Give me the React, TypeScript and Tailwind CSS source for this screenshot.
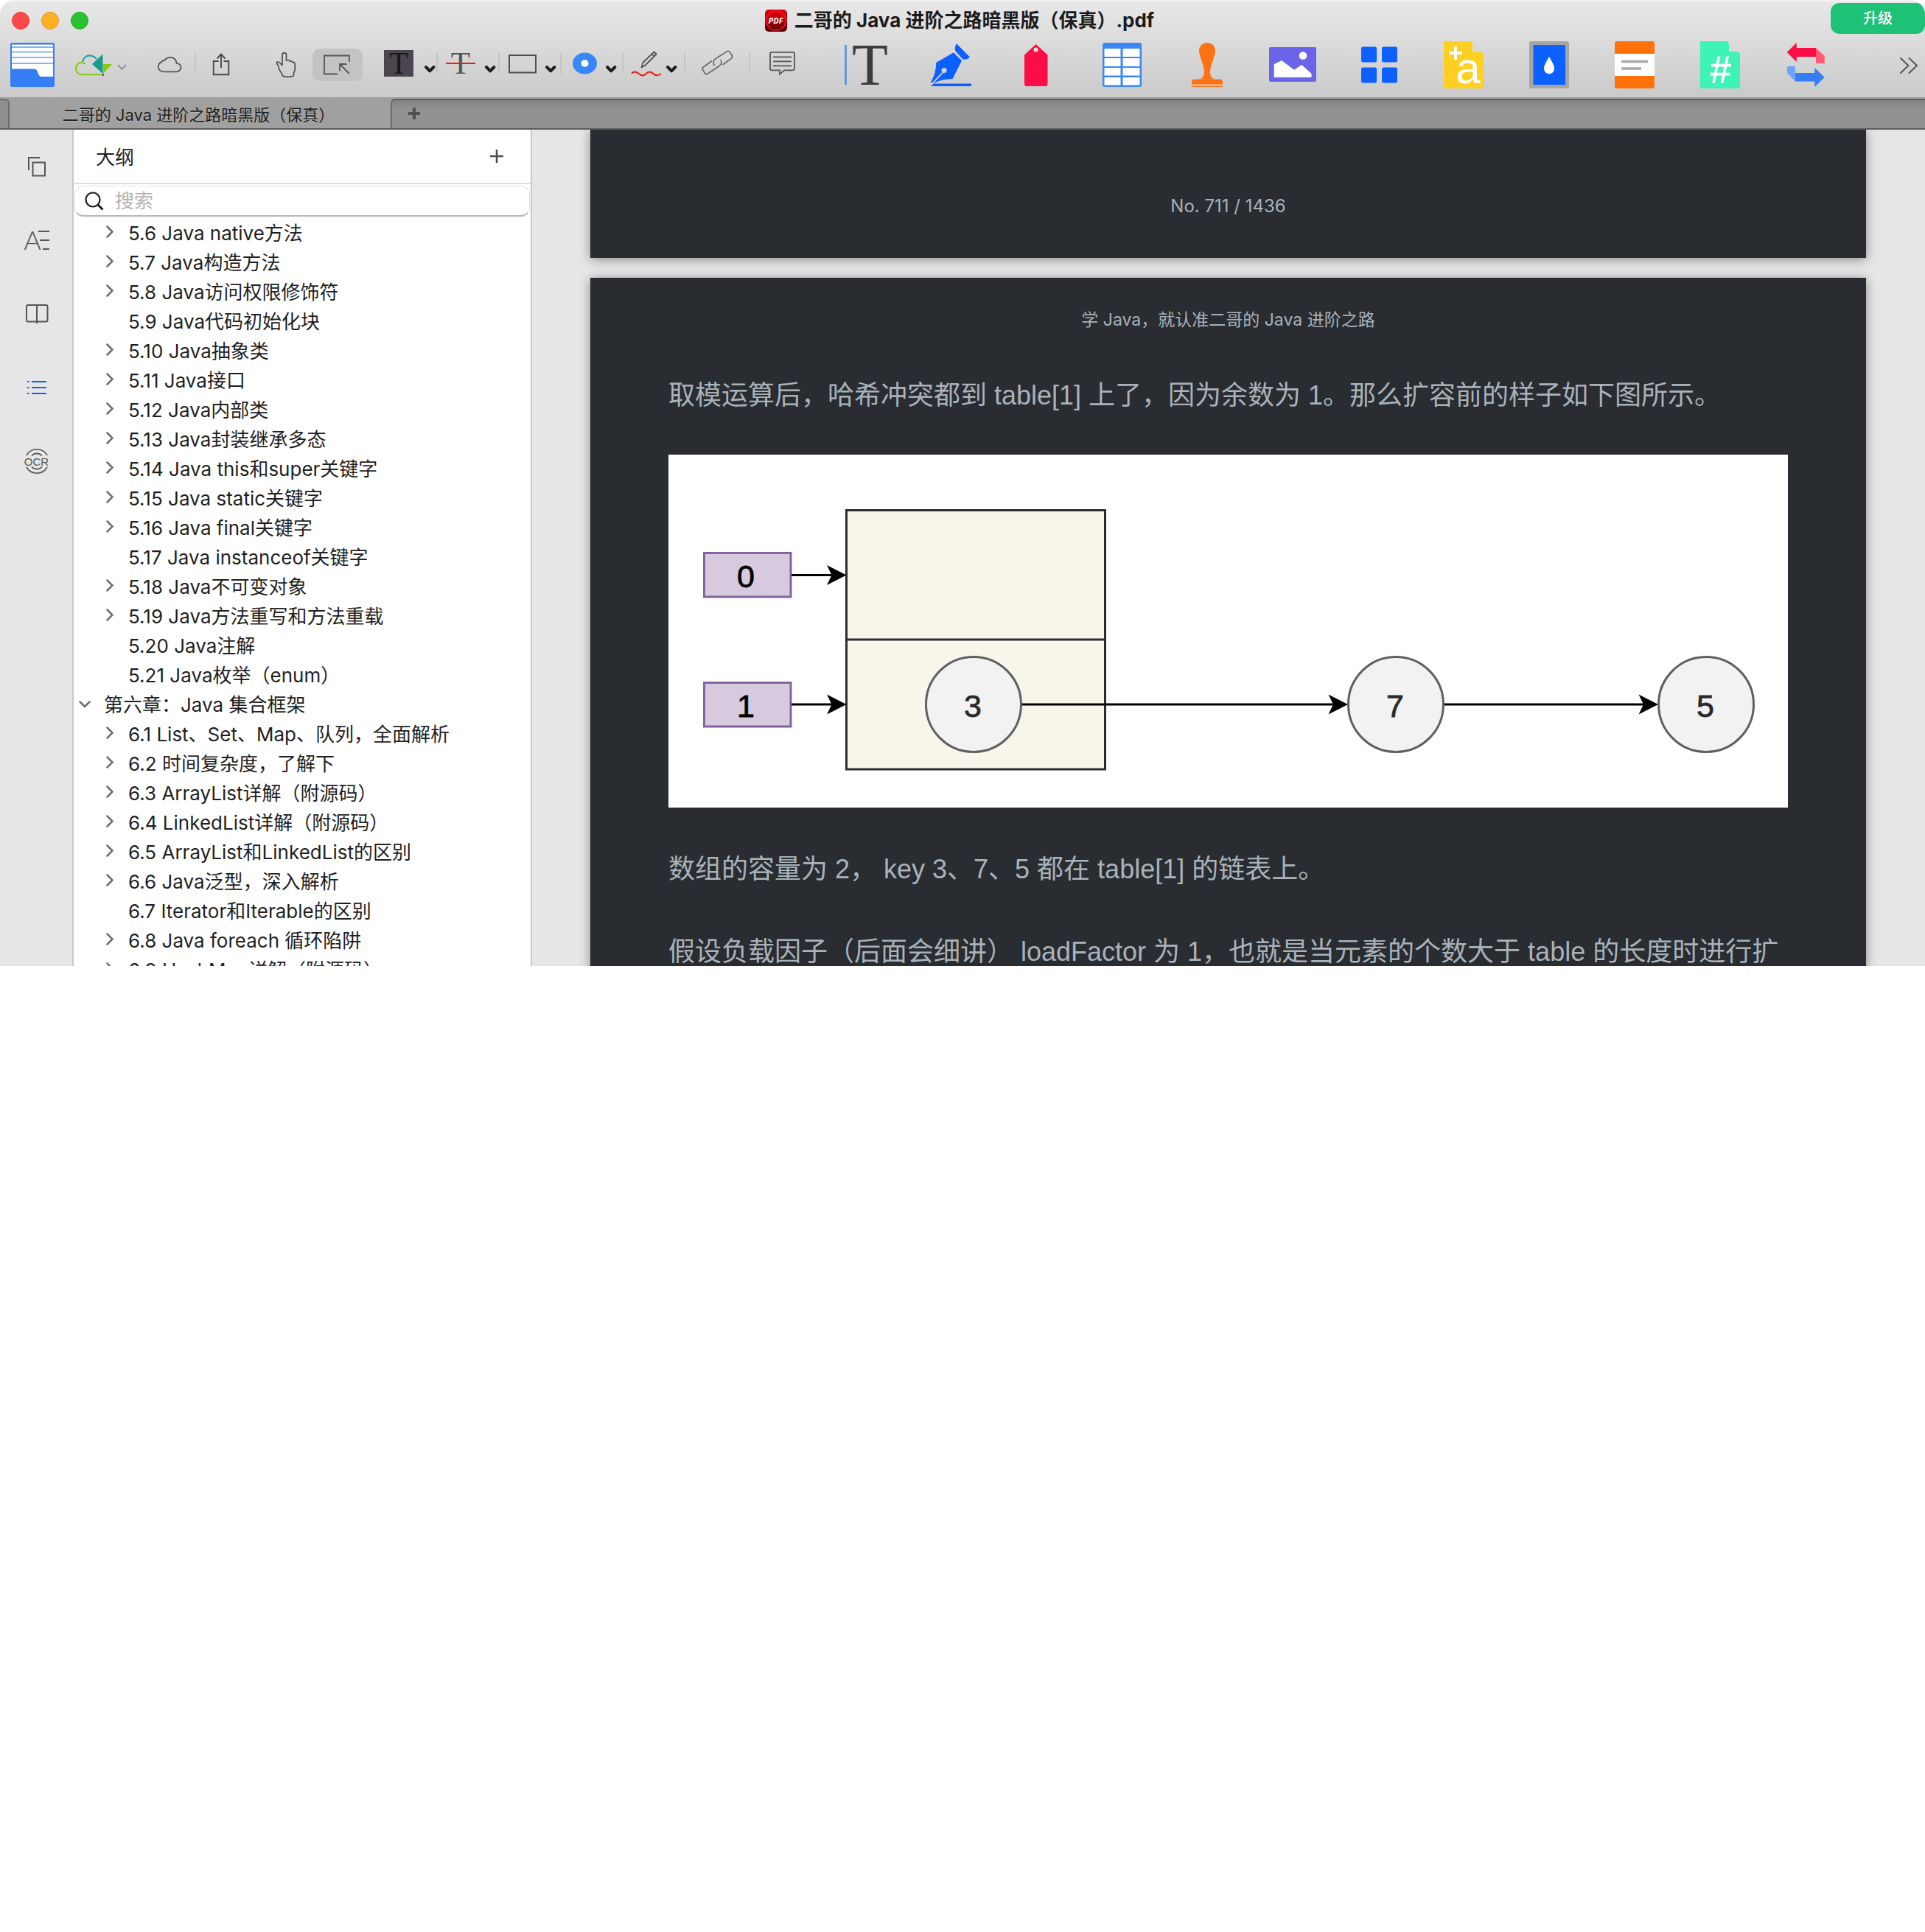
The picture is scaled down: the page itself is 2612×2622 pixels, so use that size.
import type { ReactNode } from "react";

const UI_FONT = "font-['Inter','Noto_Sans_CJK_SC',sans-serif]";
const DOC_FONT = "font-['Liberation_Sans','Noto_Sans_CJK_SC',sans-serif]";

/* Toolbar drawings share one coordinate space: each tool shows the slice that starts at x. */
function Tool({ label, x, w, children }: { label: string; x: number; w: number; children: ReactNode }) {
  return (
    <button type="button" aria-label={label} className="shrink-0">
      <svg width={w} height={76} viewBox={`${x} 56 ${w} 76`} fill="none" className="block overflow-visible">
        {children}
      </svg>
    </button>
  );
}

function Divider() {
  return <div className="mt-4 h-7 w-0.5 shrink-0 bg-[#c4c4c4]" />;
}

function Caret({ x }: { x: number }) {
  return (
    <path d={`M${x + 2} 91l5.2 5.400 5.200-5.400`} stroke="#1d1d1d" strokeWidth="4" strokeLinecap="round" strokeLinejoin="round" />
  );
}

function RailButton({ label, cy, children }: { label: string; cy: number; children: ReactNode }) {
  return (
    <button type="button" aria-label={label} className="block h-[100px] w-full">
      <svg width="98" height="100" viewBox={`0 ${cy - 50} 98 100`} fill="none" stroke="#555" strokeWidth="2" className="block">
        {children}
      </svg>
    </button>
  );
}

function TitleBar() {
  return (
    <div className="grid h-14 grid-cols-[1fr_auto_1fr] items-center">
      <div className="flex gap-4 pl-4">
        <button type="button" aria-label="关闭" className="size-6 rounded-full border border-[#e0383a] bg-[#fe4748]" />
        <button type="button" aria-label="最小化" className="size-6 rounded-full border border-[#dc971c] bg-[#fdb025]" />
        <button type="button" aria-label="缩放" className="size-6 rounded-full border border-[#1fa82c] bg-[#2ac231]" />
      </div>
      <div className="flex items-center gap-2.5 pr-2">
        <svg width="30" height="30" viewBox="0 0 30 30" aria-hidden="true">
          <defs>
            <linearGradient id="pdf" x1="0" y1="0" x2="0" y2="1">
              <stop offset="0" stopColor="#e8000b" />
              <stop offset="0.5" stopColor="#b0000a" />
              <stop offset="1" stopColor="#4d0003" />
            </linearGradient>
          </defs>
          <rect width="30" height="30" rx="5" fill="url(#pdf)" />
          <circle cx="15" cy="15" r="13" fill="none" stroke="#f5192b" strokeWidth="1.600" />
          <text x="14.500" y="19" textAnchor="middle" fontFamily="Open Sans, sans-serif" fontWeight="700" fontStyle="italic" fontSize="11" fill="#fff">
            PDF
          </text>
        </svg>
        <h1 className="text-[26px] leading-8 font-bold text-[#1c1c1c]">二哥的 Java 进阶之路暗黑版（保真）.pdf</h1>
      </div>
      <button type="button" className="h-[42px] w-32 -translate-y-[3px] justify-self-end rounded-xl bg-[#1dc277] text-[20px] font-medium text-white">
        升级
      </button>
    </div>
  );
}

function Toolbar() {
  return (
    <div className="flex h-[76px]">
      <Tool label="侧边栏" x={0} w={88}>
        <rect x="14" y="58" width="60" height="60" rx="2.500" fill="#347df3" />
        <path d="M16 60.500H72V104H56c-5 0-4-10.500-9.500-10.500H16z" fill="#fff" />
        <path d="M16 64H72M16 70.500H72M16 78H72M16 86H72" stroke="#5e9bf7" strokeWidth="1.500" />
      </Tool>
      <Tool label="云服务" x={88} w={104}>
        <path d="M115.500 87c-1.500-1.700-3-2.300-5.500-2.300a8.400 8.400 0 0 0 0 16.600h26.500" stroke="#84cc0a" strokeWidth="2" />
        <path d="M112 84c1-5.500 5-8.500 9.500-8.500 4 0 7 1.500 9.500 4.500" stroke="#189b8c" strokeWidth="2" />
        <path d="M139.500 73.500V100L125 87z" fill="#189b8c" />
        <path d="M140 87h12l-12 13z" fill="#84cc0a" />
        <circle cx="139.500" cy="101.500" r="1.700" fill="#666" />
        <path d="M160 88l5.500 6 5.500-6" stroke="#888" strokeWidth="1.800" />
      </Tool>
      <Tool label="云端" x={192} w={72}>
        <path d="M222 97.300c-4 0-7.200-2.800-7.200-6.500 0-3.300 1.700-5.700 4.200-6.300.2-1.800 1.800-2.500 4.200-2.500 1.800-2.800 4.500-4.200 7.800-4.200 4.800 0 8.500 3.200 8.500 8 3.500.5 6 2.300 6 5.500s-2.500 6-6 6z" stroke="#555" strokeWidth="1.800" strokeLinejoin="round" />
      </Tool>
      <Divider />
      <Tool label="分享" x={266} w={74}>
        <path d="M296.500 83h-6.800v18.200h20.600V83h-6.800M300 92V74M294.500 79.500l5.500-6 5.500 6" stroke="#4a4a4a" strokeWidth="1.900" />
      </Tool>
      <Tool label="手形工具" x={340} w={84}>
        <path
          d="M383 88.500V74.500a2.700 2.700 0 0 1 5.500 0V82c2.500-.7 4.500-.2 5 1.300 2-.5 3.300 0 3.700 1.200 2.200-.2 3 .8 3 3v7c0 2.300-1.700 3-1.700 5v2.500c-.3 1.500-3.500 2.300-7.500 2.300-4.500 0-8-.8-8.300-2.800-.2-3-2.200-4-3.700-7-1-2.500-.7-4.500-2.700-7.500-1.500-1-1-3.500 1.200-3 2.500.7 3.500 3 5.500 4.500z"
          stroke="#555"
          strokeWidth="1.800"
          strokeLinejoin="round"
        />
      </Tool>
      <button type="button" aria-label="选择工具" aria-pressed="true" className="mt-2.5 h-11 w-[68px] shrink-0 rounded-[10px] bg-[#c3c3c3]">
        <svg width="68" height="44" viewBox="424 66 68 44" fill="none" stroke="#555" strokeWidth="1.800" className="block">
          <path d="M474 84V75.500H440v25h18M474 100l-12.500-12.500M461 96.500v-9.500H470.500" />
        </svg>
      </button>
      <Tool label="高亮文本" x={492} w={100}>
        <rect x="521" y="68" width="40" height="36" fill="#4b464d" />
        <text x="541" y="99.500" textAnchor="middle" fontFamily="Liberation Serif, serif" fontSize="42" fill="#18161a">
          T
        </text>
        <Caret x={576} />
      </Tool>
      <Divider />
      <Tool label="删除线" x={594} w={82}>
        <text x="625" y="100" textAnchor="middle" fontFamily="Liberation Serif, serif" fontSize="43" fill="#555">
          T
        </text>
        <path d="M605 86h40" stroke="#f11" strokeWidth="2" />
        <Caret x={658} />
      </Tool>
      <Divider />
      <Tool label="矩形" x={678} w={82}>
        <rect x="691" y="75" width="36" height="23.500" stroke="#4f4f4f" strokeWidth="2" />
        <Caret x={740} />
      </Tool>
      <Divider />
      <Tool label="颜色" x={762} w={82}>
        <ellipse cx="793.500" cy="86" rx="16.500" ry="14.600" fill="#3787f7" />
        <circle cx="793.500" cy="86" r="5" fill="#fff" />
        <Caret x={822} />
      </Tool>
      <Divider />
      <Tool label="铅笔" x={846} w={82}>
        <path d="M870.500 91.500l1.800-6.500L887.500 70.500l3.200 3L875.500 88.500zM884.500 73.500l3.500 3" stroke="#555" strokeWidth="1.800" strokeLinejoin="round" />
        <path d="M857 99.500c3-2.500 6-3 9.500.3s7.500 3 10.500 0 6-3 9 0 7 3 11 .2" stroke="#f11" strokeWidth="2" />
        <Caret x={904} />
      </Tool>
      <Divider />
      <Tool label="链接" x={930} w={86}>
        <g stroke="#666" strokeWidth="1.600">
          <path d="M966 82.500L954.500 91a3 3 0 0 0-.8 4l2.500 4a3 3 0 0 0 4.300.9L976 89.500c3-2 3.200-5.500 1.800-8.500" />
          <path d="M980.500 88L992 79.700a3.500 3.500 0 0 0 1-4.600l-2.600-4.300a3 3 0 0 0-4.200-.9L970.500 80c-3 2-3 6-1 9" />
        </g>
      </Tool>
      <Divider />
      <Tool label="注释" x={1018} w={98}>
        <path d="M1047.500 70.800h28a2.500 2.500 0 0 1 2.500 2.500v19.500a2.500 2.500 0 0 1-2.500 2.500H1064l-6 5.500v-5.500h-10.500a2.500 2.500 0 0 1-2.500-2.500V73.300a2.500 2.500 0 0 1 2.500-2.500zM1049 77.300h25M1049 83.300h25M1049 89.300h25" stroke="#555" strokeWidth="1.800" />
      </Tool>
      <Tool label="编辑文本" x={1116} w={116}>
        <path d="M1147.500 61v54" stroke="#4a8cf0" strokeWidth="2.500" />
        <text x="1180.500" y="115" textAnchor="middle" fontFamily="Liberation Serif, serif" fontSize="80" fill="#3c3c3c">
          T
        </text>
      </Tool>
      <Tool label="签名" x={1232} w={116}>
        <path d="M1298 59.300L1316 77.500c-3 3-7 4.300-10 2.500L1297 70c-2-3-1.500-7 1-10.700z" fill="#0b60ff" />
        <path d="M1294 71.300L1305 82.300 1292.500 107c-11 .3-18 2-26 6.500l-3.500-1.500c5-9.500 7-16 7.200-27z" fill="#0b60ff" />
        <path d="M1263.500 115L1279.500 98" stroke="#d0d0d0" strokeWidth="1.800" />
        <circle cx="1281" cy="95.500" r="3.600" fill="#d2d2d2" />
        <path d="M1263 117l4-3.500h51V117z" fill="#0b60ff" />
      </Tool>
      <Tool label="标签" x={1348} w={116}>
        <path d="M1405.500 60L1421.500 74.500V114a3 3 0 0 1-3 3H1393a3 3 0 0 1-3-3V74.500z" fill="#fd0d45" />
        <circle cx="1405.500" cy="67.500" r="3" fill="#ddd" />
      </Tool>
      <Tool label="表格" x={1464} w={116}>
        <rect x="1496" y="58" width="53" height="60" rx="3" fill="#3a88f7" />
        <path
          d="M1498.500 66h22v11h-22zM1523.500 66h23v11h-23zM1498.500 79h22v11h-22zM1523.500 79h23v11h-23zM1498.500 92h22v10.500h-22zM1523.500 92h23v10.500h-23zM1498.500 105h22v10.500h-22zM1523.500 105h23v10.500h-23z"
          fill="#fff"
        />
      </Tool>
      <Tool label="图章" x={1580} w={116}>
        <path d="M1638 58c7 0 11 5 11 11 0 8-7 18-7 29 0 4 2 8 6 9.500h-20c4-1.500 6-5.500 6-9.500 0-11-7-21-7-29 0-6 4-11 11-11z" fill="#ff7213" />
        <path d="M1621 107.500h34a4 4 0 0 1 4 4v3h-42v-3a4 4 0 0 1 4-4zM1617 116.500h42v1.500h-42z" fill="#ff7213" />
      </Tool>
      <Tool label="图片" x={1696} w={116}>
        <rect x="1722" y="64" width="64" height="47" rx="2" fill="#6c64e8" />
        <circle cx="1768" cy="75.500" r="5.300" fill="#fff" />
        <path d="M1728.700 87.300L1739 82l17 12.700 10.300-6.700L1779.500 100v5h-50.800z" fill="#fff" />
      </Tool>
      <Tool label="组织页面" x={1812} w={116}>
        <g fill="#0b60ff">
          <rect x="1847" y="63.500" width="21" height="21" rx="2.500" />
          <rect x="1875" y="63.500" width="21" height="21" rx="2.500" />
          <rect x="1847" y="91.500" width="21" height="21" rx="2.500" />
          <rect x="1875" y="91.500" width="21" height="21" rx="2.500" />
        </g>
      </Tool>
      <Tool label="添加文字" x={1928} w={116}>
        <path d="M1959 56h34.500a4.500 4.500 0 0 1 4.500 4.500V70h10a5 5 0 0 1 5 5v45h-54z" fill="#ffd021" />
        <path d="M1966 72h18M1975 63v18" stroke="#fff" strokeWidth="4" />
        <text x="1992" y="112.500" textAnchor="middle" fontFamily="Liberation Sans, sans-serif" fontSize="60" fill="#fff">
          a
        </text>
      </Tool>
      <Tool label="水印" x={2044} w={116}>
        <rect x="2075" y="56" width="54" height="64" rx="3" fill="#a5a5a5" />
        <rect x="2080.500" y="61" width="43.500" height="54" rx="1.500" fill="#0b60ff" />
        <path d="M2102 76.700c3 6 7 11 7 16.500a7 7 0 0 1-14 0c0-5.500 4-10.500 7-16.500z" fill="#fff" />
      </Tool>
      <Tool label="页眉页脚" x={2160} w={116}>
        <rect x="2191" y="56" width="54" height="64" rx="3" fill="#ff720a" />
        <rect x="2191" y="73" width="54" height="30" fill="#fff" />
        <path d="M2200 83.500h36M2200 93h27" stroke="#a8a8a8" strokeWidth="3.500" />
      </Tool>
      <Tool label="页码" x={2276} w={116}>
        <path d="M2307 56h34.500a4.500 4.500 0 0 1 4.500 4.500V70h10a5 5 0 0 1 5 5v45h-54z" fill="#3ef3b6" />
        <text x="2334" y="111.500" textAnchor="middle" fontFamily="Liberation Sans, sans-serif" fontStyle="italic" fontSize="50" fill="#fff" stroke="#fff">
          #
        </text>
      </Tool>
      <Tool label="转换" x={2392} w={116}>
        <path d="M2424.700 71l13-13v7H2464v12h-26.300v7z" fill="#fd0d45" />
        <path d="M2464 65l11.700 11v10H2464z" fill="#ff5b75" />
        <path d="M2475.700 105l-13.500-13v7H2436v11.500h26.200v7.500z" fill="#347df3" />
        <path d="M2436 110.500L2425 99v-9h11z" fill="#6ea4ff" />
      </Tool>
      <div className="flex-1" />
      <Tool label="更多工具" x={2560} w={52}>
        <path d="M2579 79l10.500 10-10.500 10M2590.500 79l10.500 10-10.500 10" stroke="#555" strokeWidth="2" strokeLinecap="round" />
      </Tool>
    </div>
  );
}

function TabStrip() {
  return (
    <div className="flex h-11 border-b-2 border-[#5c5c5c] bg-[#a0a0a0]">
      <div className="mt-0.5 w-[13px] rounded-tr-md border-t-2 border-r-2 border-[#6c6c6c] bg-[#8e8e8e]" />
      <button type="button" className="w-[517px] pt-1 pr-5 pl-4 text-[22px] leading-10 text-[#1c1c1c] [text-shadow:0_1px_0_#bbb]">
        二哥的 Java 进阶之路暗黑版（保真）
      </button>
      <div className="mt-0.5 flex-1 rounded-tl-md border-t-2 border-l-2 border-t-[#5e5e5e] border-l-[#6c6c6c] bg-linear-to-b from-[#838383] to-[#929292] to-30% pl-[22px]">
        <button type="button" aria-label="新标签页" className="pt-2.5">
          <svg width="16" height="16" viewBox="0 0 16 16" className="block">
            <path d="M8 0v16M0 8h16" stroke="#505050" strokeWidth="4" />
          </svg>
        </button>
      </div>
    </div>
  );
}

function Rail() {
  return (
    <nav aria-label="侧栏面板" className="w-[98px] shrink-0">
      <RailButton label="缩略图" cy={226}>
        <path d="M54 214H39v17M44.500 220.500h16.500v18H44.500z" />
      </RailButton>
      <RailButton label="注释" cy={326}>
        <text x="44" y="339" textAnchor="middle" fontFamily="Lato, sans-serif" fontWeight="300" fontSize="36" fill="#555" stroke="none">
          A
        </text>
        <path d="M52 314h15M54 326h13M58 338h9" />
      </RailButton>
      <RailButton label="书签" cy={426}>
        <rect x="36" y="414" width="28.500" height="22.500" rx="2" />
        <path d="M50 414v25" />
      </RailButton>
      <RailButton label="大纲" cy={526}>
        <path d="M37 518h2.500M43 518h20M37 526h2.500M43 526h20M37 534h2.500M43 534h20" stroke="#0b60ff" />
      </RailButton>
      <RailButton label="文字识别" cy={626}>
        <text x="49.500" y="631.500" textAnchor="middle" fontFamily="Liberation Sans, sans-serif" fontSize="15" fill="#555" stroke="none">
          OCR
        </text>
        <path d="M36 618a16 16 0 0 1 28 0M36 634a16 16 0 0 0 28 0M43 618.500a9.500 9.500 0 0 1 14 0M43 633.500a9.500 9.500 0 0 0 14 0" strokeWidth="1.600" />
      </RailButton>
    </nav>
  );
}

type OutlineItem = { text: string; kind: "closed" | "leaf" | "open" };

const outline: OutlineItem[] = [
  { text: "5.6 Java native方法", kind: "closed" },
  { text: "5.7 Java构造方法", kind: "closed" },
  { text: "5.8 Java访问权限修饰符", kind: "closed" },
  { text: "5.9 Java代码初始化块", kind: "leaf" },
  { text: "5.10 Java抽象类", kind: "closed" },
  { text: "5.11 Java接口", kind: "closed" },
  { text: "5.12 Java内部类", kind: "closed" },
  { text: "5.13 Java封装继承多态", kind: "closed" },
  { text: "5.14 Java this和super关键字", kind: "closed" },
  { text: "5.15 Java static关键字", kind: "closed" },
  { text: "5.16 Java final关键字", kind: "closed" },
  { text: "5.17 Java instanceof关键字", kind: "leaf" },
  { text: "5.18 Java不可变对象", kind: "closed" },
  { text: "5.19 Java方法重写和方法重载", kind: "closed" },
  { text: "5.20 Java注解", kind: "leaf" },
  { text: "5.21 Java枚举（enum）", kind: "leaf" },
  { text: "第六章：Java 集合框架", kind: "open" },
  { text: "6.1 List、Set、Map、队列，全面解析", kind: "closed" },
  { text: "6.2 时间复杂度，了解下", kind: "closed" },
  { text: "6.3 ArrayList详解（附源码）", kind: "closed" },
  { text: "6.4 LinkedList详解（附源码）", kind: "closed" },
  { text: "6.5 ArrayList和LinkedList的区别", kind: "closed" },
  { text: "6.6 Java泛型，深入解析", kind: "closed" },
  { text: "6.7 Iterator和Iterable的区别", kind: "leaf" },
  { text: "6.8 Java foreach 循环陷阱", kind: "closed" },
  { text: "6.9 HashMap详解（附源码）", kind: "closed" },
];

function OutlineRow({ text, kind }: OutlineItem) {
  return (
    <li>
      <button type="button" className={kind === "open" ? "flex h-10 w-full items-center gap-[18px] pl-[7px]" : "flex h-10 w-full items-center gap-[18px] pl-10"}>
        <svg width="16" height="20" viewBox="0 0 16 20" fill="none" stroke="#6e6e6e" strokeWidth="2.500" strokeLinecap="round" className="shrink-0">
          {kind === "closed" && <path d="M5.500 1.500l7 7-7 7" />}
          {kind === "open" && <path d="M1.500 6.500l6.500 6.500 6.500-6.500" />}
        </svg>
        <span className="pt-0.5 text-[26px] leading-10 whitespace-nowrap text-[#1f1f1f]">{text}</span>
      </button>
    </li>
  );
}

function OutlinePanel() {
  return (
    <aside className="w-[624px] shrink-0 overflow-hidden border-x-2 border-[#c8c8c8] bg-white">
      <div className="flex h-[74px] items-center justify-between border-b-2 border-[#dedede] pr-[37px] pl-[30px]">
        <h2 className="pt-1 text-[26px] leading-9 text-[#1f1f1f]">大纲</h2>
        <button type="button" aria-label="添加大纲">
          <svg width="18" height="18" viewBox="0 0 18 18" stroke="#4a4a4a" strokeWidth="2.500">
            <path d="M9 0v18M0 9h18" />
          </svg>
        </button>
      </div>
      <label className="mx-px my-0.5 flex h-[42px] items-center gap-[15px] rounded-xl border border-b-2 border-[#e2e2e2] border-b-[#b5b5b5] pl-[13px]">
        <svg width="26" height="26" viewBox="0 0 26 26" fill="none" stroke="#1d1d1d" aria-hidden="true">
          <circle cx="11" cy="11" r="9.500" strokeWidth="2.200" />
          <path d="M17.500 17.500l7 7" strokeWidth="3" />
        </svg>
        <input type="search" aria-label="搜索" placeholder="搜索" className="min-w-0 flex-1 bg-transparent text-[26px] leading-9 outline-none placeholder:text-[#b4b4b4]" />
      </label>
      <ul>
        {outline.map((item) => (
          <OutlineRow key={item.text} {...item} />
        ))}
      </ul>
    </aside>
  );
}

function HashTableDiagram() {
  const digit = { textAnchor: "middle" as const, fontFamily: "Liberation Sans, sans-serif", fontSize: 43, strokeWidth: 0.8 };
  return (
    <svg viewBox="907 617 1519 479" className="block w-full bg-white" role="img" aria-label="扩容前的哈希表">
      <rect x="1148.500" y="692.500" width="351" height="351.500" fill="#f8f5ea" stroke="#2c2c2c" strokeWidth="3" />
      <path d="M1148.500 868H1500" stroke="#2c3030" strokeWidth="3" />
      {[0, 1].map((n) => (
        <g key={n}>
          <rect x="955.500" y={750.5 + n * 176} width="117.500" height="59.500" fill="#d7cadf" stroke="#83659b" strokeWidth="3" />
          <text {...digit} x="1012" y={797 + n * 175.5} fill="#000" stroke="#000">
            {n}
          </text>
          <path d={`M1074 ${780.5 + n * 175.5}h60`} stroke="#000" strokeWidth="3" />
          <path d={`M1148.500 ${780.5 + n * 175.5}l-26.500-13.500 6.500 13.500-6.500 13.500z`} fill="#000" />
        </g>
      ))}
      <path d="M1387 956h425M1960 956h272" stroke="#000" strokeWidth="3" />
      <path d="M1829 956l-26.500-13.500 6.500 13.500-6.500 13.500zM2250 956l-26.500-13.500 6.500 13.500-6.500 13.500z" fill="#000" />
      {[
        { cx: 1321, value: 3 },
        { cx: 1894, value: 7 },
        { cx: 2315, value: 5 },
      ].map(({ cx, value }) => (
        <g key={value}>
          <circle cx={cx} cy="956" r="64.500" fill="#f2f2f2" stroke="#5f5f5f" strokeWidth="3" />
          <text {...digit} x={cx - 1} y="972.500" fill="#2a2a2a" stroke="#2a2a2a">
            {value}
          </text>
        </g>
      ))}
    </svg>
  );
}

function DocumentView() {
  return (
    <main className={`flex min-w-0 flex-1 flex-col gap-[27px] overflow-hidden pr-20 pl-[79px] text-[#a9b2b9] ${DOC_FONT}`}>
      <section className="flex h-[174px] shrink-0 items-end justify-center bg-[#292c31] pb-[54px] shadow-[0_2px_14px_rgba(0,0,0,0.4)]">
        <p className={`text-[24px] leading-8 ${UI_FONT}`}>No. 711 / 1436</p>
      </section>
      <section className="shrink-0 bg-[#292c31] px-[106px] pt-[41px] pb-14 shadow-[0_2px_14px_rgba(0,0,0,0.4)]">
        <p className={`text-center text-[23px] leading-8 ${UI_FONT}`}>学 Java，就认准二哥的 Java 进阶之路</p>
        <p className="mt-[59px] text-[36px] leading-[56px]">取模运算后，哈希冲突都到 table[1] 上了，因为余数为 1。那么扩容前的样子如下图所示。</p>
        <div className="mt-[52px] mb-14">
          <HashTableDiagram />
        </div>
        <p className="my-14 text-[36px] leading-[56px]">数组的容量为 2， key 3、7、5 都在 table[1] 的链表上。</p>
        <p className="mt-14 text-[36px] leading-[56px]">
          假设负载因子（后面会细讲） loadFactor 为 1，也就是当元素的个数大于 table 的长度时进行扩
        </p>
      </section>
    </main>
  );
}

export default function App() {
  return (
    <div className="min-h-screen bg-white">
      <div className={`flex h-[50vh] flex-col overflow-hidden rounded-t-[20px] bg-[#e6e6e6] ${UI_FONT}`}>
        <header className="shrink-0 border-t-2 border-[#f2f2f2] bg-linear-to-b from-[#e8e8e8] to-[#cacaca]">
          <div className="-mt-0.5">
            <TitleBar />
            <Toolbar />
          </div>
        </header>
        <div className="shrink-0">
          <TabStrip />
        </div>
        <div className="flex min-h-0 flex-1">
          <Rail />
          <OutlinePanel />
          <DocumentView />
        </div>
      </div>
    </div>
  );
}
